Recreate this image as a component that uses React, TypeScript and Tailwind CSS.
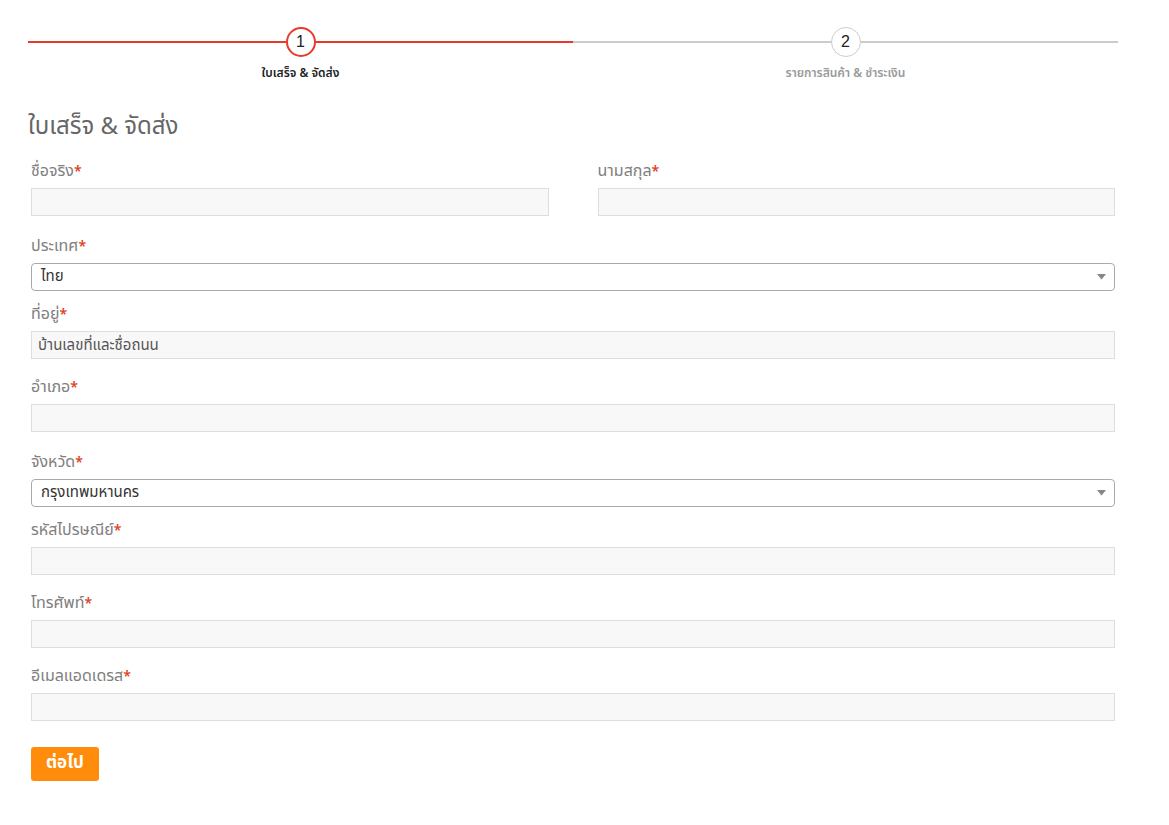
import React from 'react';

const thai = { fontFamily: '"Noto Sans Thai", "Noto Sans", "Liberation Sans", sans-serif' };

function Step({ num, label, active }: { num: number; label: string; active: boolean }) {
  return (
    <div className="flex-1 flex flex-col items-center">
      <div className="flex items-center w-full">
        <div className={`flex-1 h-[2px] ${active ? 'bg-[#e8392c]' : 'bg-[#cccccc]'}`}></div>
        <div
          className={`w-[30px] h-[30px] rounded-full bg-white flex items-center justify-center text-[16px] text-[#222] ${
            active ? 'border-2 border-[#e8392c]' : 'border border-[#cccccc]'
          }`}
          style={{ fontFamily: '"Liberation Sans", Arial, sans-serif' }}
        >
          {num}
        </div>
        <div className={`flex-1 h-[2px] ${active ? 'bg-[#e8392c]' : 'bg-[#cccccc]'}`}></div>
      </div>
      <div className={`mt-[8px] text-[12px] leading-[16px] font-semibold ${active ? 'text-[#222]' : 'text-[#9a9a9a]'}`}>
        {label}
      </div>
    </div>
  );
}

function Label({ text }: { text: string }) {
  return (
    <div className="text-[16px] leading-[22px] text-[#808080] mb-[5px]">
      {text}
      <span className="text-[#e0401c] text-[14px] font-semibold">*</span>
    </div>
  );
}

function TextField({ label, placeholder, mb }: { label: string; placeholder?: string; mb: string }) {
  return (
    <div className={mb}>
      <Label text={label} />
      <input
        type="text"
        placeholder={placeholder}
        className="w-full h-[28px] px-[6px] bg-[#f8f8f8] border border-[#dedede] text-[15px] text-[#444] placeholder:text-[#555] outline-none"
        style={thai}
      />
    </div>
  );
}

function SelectField({ label, value, mb }: { label: string; value: string; mb: string }) {
  return (
    <div className={mb}>
      <Label text={label} />
      <div className="w-full h-[28px] bg-white border border-[#aaaaaa] rounded-[4px] flex items-center justify-between pl-[9px] pr-[8px]">
        <span className="text-[15px] text-[#333]">{value}</span>
        <svg width="9" height="6" viewBox="0 0 9 6">
          <path d="M0 0 L9 0 L4.5 5.5 Z" fill="#888" />
        </svg>
      </div>
    </div>
  );
}

export default function App() {
  return (
    <div className="min-h-screen bg-white pt-[27px] pl-[28px] pr-[51px] pb-10" style={thai}>
      {/* Steps */}
      <div className="flex w-[1090px]">
        <Step num={1} label="ใบเสร็จ & จัดส่ง" active />
        <Step num={2} label="รายการสินค้า & ชำระเงิน" active={false} />
      </div>

      {/* Heading */}
      <h1 className="mt-[30px] text-[24px] leading-[32px] text-[#666] font-normal">ใบเสร็จ & จัดส่ง</h1>

      <div className="mt-[17px] pl-[3px] w-[1087px]">
        {/* name row */}
        <div className="flex gap-[49px] mb-[19px]">
          <div className="flex-1">
            <Label text="ชื่อจริง" />
            <input type="text" className="w-full h-[28px] bg-[#f8f8f8] border border-[#dedede] outline-none" />
          </div>
          <div className="flex-1">
            <Label text="นามสกุล" />
            <input type="text" className="w-full h-[28px] bg-[#f8f8f8] border border-[#dedede] outline-none" />
          </div>
        </div>

        <SelectField label="ประเทศ" value="ไทย" mb="mb-[12px]" />
        <TextField label="ที่อยู่" placeholder="บ้านเลขที่และชื่อถนน" mb="mb-[17px]" />
        <TextField label="อำเภอ" mb="mb-[19px]" />
        <SelectField label="จังหวัด" value="กรุงเทพมหานคร" mb="mb-[12px]" />
        <TextField label="รหัสไปรษณีย์" mb="mb-[17px]" />
        <TextField label="โทรศัพท์" mb="mb-[17px]" />
        <TextField label="อีเมลแอดเดรส" mb="mb-[26px]" />

        <button className="h-[34px] px-[15px] bg-[#ff8c0a] rounded-[3px] text-white text-[17px] font-bold">
          ต่อไป
        </button>
      </div>
    </div>
  );
}
